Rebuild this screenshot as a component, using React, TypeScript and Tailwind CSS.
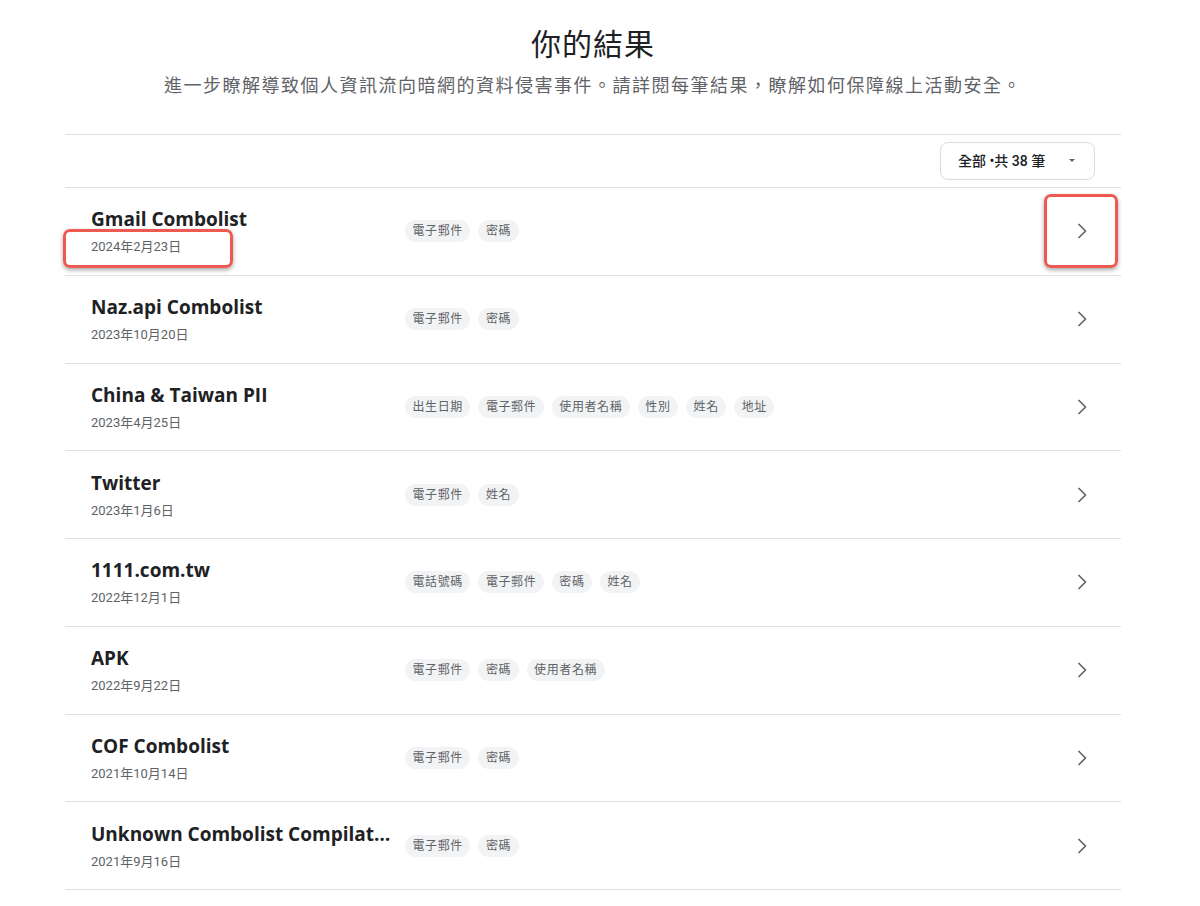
import React from "react";

const rows = [
  { name: "Gmail Combolist", date: "2024年2月23日", tags: ["電子郵件", "密碼"] },
  { name: "Naz.api Combolist", date: "2023年10月20日", tags: ["電子郵件", "密碼"] },
  { name: "China & Taiwan PII", date: "2023年4月25日", tags: ["出生日期", "電子郵件", "使用者名稱", "性別", "姓名", "地址"] },
  { name: "Twitter", date: "2023年1月6日", tags: ["電子郵件", "姓名"] },
  { name: "1111.com.tw", date: "2022年12月1日", tags: ["電話號碼", "電子郵件", "密碼", "姓名"] },
  { name: "APK", date: "2022年9月22日", tags: ["電子郵件", "密碼", "使用者名稱"] },
  { name: "COF Combolist", date: "2021年10月14日", tags: ["電子郵件", "密碼"] },
  { name: "Unknown Combolist Compilation", date: "2021年9月16日", tags: ["電子郵件", "密碼"] },
];

const font = { fontFamily: 'Roboto, "Noto Sans CJK TC", sans-serif' };
const titleFont = { fontFamily: '"Open Sans", Roboto, sans-serif' };

function Chevron() {
  return (
    <svg width="16" height="18" viewBox="0 0 16 18" fill="none">
      <path d="M4.5 2 L11.5 9 L4.5 16" stroke="#5f6368" strokeWidth="1.6" />
    </svg>
  );
}

export default function App() {
  return (
    <div className="bg-white min-h-[906px] w-[1200px]" style={font}>
      <div className="ml-[65px] w-[1056px] relative">
        <div className="pt-[26px] text-center">
          <h1 className="text-[30px] leading-[38px] text-[#202124] font-normal tracking-[1px]">你的結果</h1>
          <p className="mt-[10px] text-[18px] leading-[24px] text-[#5f6368] tracking-[1.5px]">
            進一步瞭解導致個人資訊流向暗網的資料侵害事件。請詳閱每筆結果，瞭解如何保障線上活動安全。
          </p>
        </div>
        <div className="mt-[36px] border-t border-b border-[#e0e0e0] h-[54px] flex items-center justify-end pr-[26px]">
          <button className="h-[38px] w-[155px] border border-[#dadce0] rounded-[8px] flex items-center justify-between pl-[17px] pr-[17px] text-[14px] text-[#202124] font-medium">
            <span>全部 •共 38 筆</span>
            <svg width="10" height="6" viewBox="0 0 10 6">
              <path d="M2 1 L8 1 L5 4 Z" fill="#5f6368" />
            </svg>
          </button>
        </div>
        {rows.map((r, i) => (
          <div key={i} className="h-[87.75px] border-b border-[#e0e0e0] flex items-center">
            <div className="w-[340px] pl-[26px] pr-[14px]">
              <div className="text-[19px] leading-[24px] font-bold text-[#202124] truncate" style={titleFont}>
                {r.name}
              </div>
              <div className="mt-[8px] text-[13px] leading-[16px] text-[#5f6368]">{r.date}</div>
            </div>
            <div className="flex gap-[8px] flex-1">
              {r.tags.map((t, j) => (
                <span key={j} className="h-[22px] px-[7.5px] rounded-full bg-[#f1f3f4] text-[12px] leading-[22px] text-[#5f6368] tracking-[0.6px]">
                  {t}
                </span>
              ))}
            </div>
            <div className="w-[64px] flex items-center justify-center mr-[7px]">
              <Chevron />
            </div>
          </div>
        ))}
        <div className="absolute left-[-2px] top-[229px] w-[170px] h-[39px] border-[3px] border-[#ee5a52] rounded-[7px] shadow-[0_2px_4px_rgba(0,0,0,0.35)]" />
        <div className="absolute left-[979px] top-[194px] w-[74px] h-[74px] border-[3px] border-[#ee5a52] rounded-[7px] shadow-[0_2px_4px_rgba(0,0,0,0.35)]" />
      </div>
    </div>
  );
}
